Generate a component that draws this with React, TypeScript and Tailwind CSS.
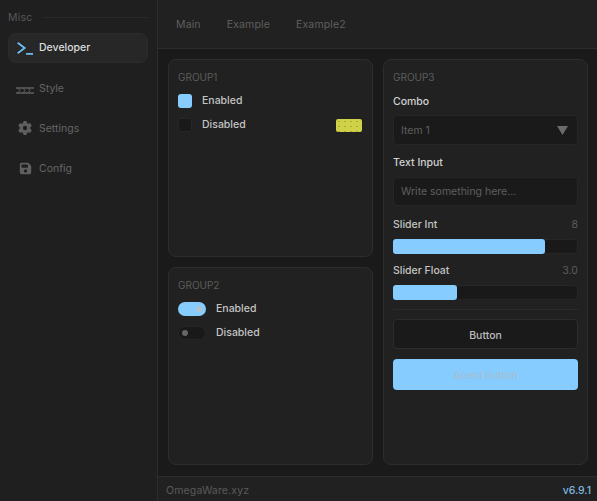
import React from "react"
import { FaGear, FaFloppyDisk } from "react-icons/fa6"

function StyleIcon() {
  return (
    <svg width="18" height="7" viewBox="0 0 18 7" fill="none" stroke="#5f5f5f" strokeWidth="1.300" className="mt-[5px]">
      <path d="M0 1h18M0 6h18" />
      <path d="M2 1l2 2.500L2 6M7 1l2 2.500L7 6M12 1l2 2.500L12 6" strokeWidth="1" />
    </svg>
  )
}

function TerminalIcon() {
  return (
    <svg width="16" height="13" viewBox="0 0 16 13" fill="none" stroke="#6fc3fb" strokeWidth="1.700">
      <path d="M0.700 0.700l7 5.300-7 5.300" />
      <path d="M9 11.900h7" />
    </svg>
  )
}

function NavItem({ icon, label, active }: { icon: React.ReactNode; label: string; active?: boolean }) {
  return (
    <div className={`flex h-[30px] items-center rounded-lg border ${active ? "border-[#2c2c2c] bg-[#272727]" : "border-transparent"}`}>
      <div className="flex w-[30px] shrink-0 justify-center pl-[2px]">{icon}</div>
      <span className={`text-[10.500px] ${active ? "font-medium text-[#dcdcdc]" : "mt-[1px] text-[#666666]"}`}>{label}</span>
    </div>
  )
}

function Group({ title, className = "", children }: { title: string; className?: string; children: React.ReactNode }) {
  return (
    <div className={`rounded-lg border border-[#2d2d2d] bg-[#212121] px-[9px] pt-[10px] ${className}`}>
      <p className="text-[10px] leading-[14px] text-[#5c5c5c]">{title}</p>
      {children}
    </div>
  )
}

function Slider({ label, value, pct }: { label: string; value: string; pct: string }) {
  return (
    <div>
      <div className="flex items-center justify-between text-[10.500px] leading-[14px]">
        <span className="font-medium text-[#c4c4c4]">{label}</span>
        <span className="text-[#5c5c5c]">{value}</span>
      </div>
      <div className="mt-[7px] h-[15px] rounded-[4px] border border-[#262626] bg-[#191919]">
        <div className={`-m-[1px] h-[15px] rounded-[3px] bg-[#86ccff] ${pct}`} />
      </div>
    </div>
  )
}

export default function App() {
  return (
    <div className="flex h-[501px] w-[597px] overflow-hidden bg-[#1f1f1f] font-['Inter','Liberation_Sans',sans-serif]">
      {/* sidebar */}
      <aside className="flex w-[158px] shrink-0 flex-col border-r border-[#2d2d2d] pl-[8px] pr-[9px]">
        <div className="flex h-[33px] items-center gap-[10px] pt-[2px]">
          <span className="text-[10.500px] tracking-[0.2px] text-[#585858]">Misc</span>
          <div className="h-px flex-1 bg-[#292929]" />
        </div>
        <div className="flex flex-col gap-[10px]">
          <NavItem active icon={<TerminalIcon />} label="Developer" />
          <NavItem icon={<StyleIcon />} label="Style" />
          <NavItem icon={<FaGear size={14} color="#5f5f5f" />} label="Settings" />
          <NavItem icon={<FaFloppyDisk size={13} color="#5f5f5f" />} label="Config" />
        </div>
      </aside>

      <div className="flex min-w-0 flex-1 flex-col">
        {/* tabs */}
        <header className="flex h-[49px] shrink-0 items-center gap-[26px] border-b border-[#2d2d2d] bg-[#212121] pl-[18px] pt-[2px] text-[10.500px] tracking-[0.15px] text-[#5f5f5f]">
          <span>Main</span>
          <span>Example</span>
          <span>Example2</span>
        </header>

        <main className="grid flex-1 grid-cols-[205px_205px] gap-[10px] bg-[#1a1a1a] px-[10px] pt-[10px] pb-[11px]">
          <div className="flex flex-col gap-[10px]">
            <Group title="GROUP1" className="flex-1">
              <div className="mt-[9px] flex h-[16px] items-center gap-[10px] text-[10.500px] font-medium text-[#c4c4c4]">
                <div className="flex h-[14px] w-[14px] items-center justify-center rounded-[3px] bg-[#86ccff]">
                  <svg width="8" height="8" viewBox="0 0 8 8" fill="none" stroke="#a3c6de" strokeWidth="1">
                    <path d="M1.500 4.500l1.500 1.500 3.500-4" />
                  </svg>
                </div>
                <span>Enabled</span>
              </div>
              <div className="mt-[8px] flex h-[16px] items-center text-[10.500px] font-medium text-[#c4c4c4]">
                <div className="mr-[10px] h-[14px] w-[14px] rounded-[3px] border border-[#262626] bg-[#191919]" />
                <span>Disabled</span>
                <div className="ml-auto mr-[1px] h-[13px] w-[26px] rounded-[2px] bg-[#cfd146] bg-[radial-gradient(#a9ab38_0.5px,transparent_0.6px)] bg-[size:6px_5px]" />
              </div>
            </Group>
            <Group title="GROUP2" className="flex-1">
              <div className="mt-[9px] flex h-[16px] items-center gap-[10px] text-[10.500px] font-medium text-[#c4c4c4]">
                <div className="flex h-[14px] w-[28px] items-center justify-end rounded-full bg-[#86ccff] pr-[4px]">
                  <div className="h-[6px] w-[6px] rounded-full bg-[#b5c3cc]" />
                </div>
                <span>Enabled</span>
              </div>
              <div className="mt-[8px] flex h-[16px] items-center gap-[10px] text-[10.500px] font-medium text-[#c4c4c4]">
                <div className="flex h-[14px] w-[28px] items-center rounded-full border border-[#262626] bg-[#191919] pl-[3px]">
                  <div className="h-[6px] w-[6px] rounded-full bg-[#666666]" />
                </div>
                <span>Disabled</span>
              </div>
            </Group>
          </div>

          <Group title="GROUP3">
            <p className="mt-[10px] pt-[1px] text-[10.500px] font-medium leading-[13px] text-[#d0d0d0]">Combo</p>
            <div className="mt-[7px] flex h-[30px] items-center justify-between rounded-[4px] border border-[#262626] bg-[#1a1a1a] pl-[7px] pr-[9px]">
              <span className="mt-[2px] text-[10.500px] text-[#5f5f5f]">Item 1</span>
              <svg width="11" height="9" viewBox="0 0 11 9"><path d="M0 0h11L5.500 9z" fill="#6b6b6b" /></svg>
            </div>
            <p className="mt-[11px] text-[10.500px] font-medium leading-[14px] text-[#d0d0d0]">Text Input</p>
            <div className="mt-[7px] flex h-[29px] items-center rounded-[4px] border border-[#262626] bg-[#1a1a1a] pl-[7px]">
              <span className="text-[10.500px] text-[#5f5f5f]">Write something here...</span>
            </div>
            <div className="mt-[12px]">
              <Slider label="Slider Int" value="8" pct="w-[152px]" />
            </div>
            <div className="mt-[10px]">
              <Slider label="Slider Float" value="3.0" pct="w-[64px]" />
            </div>
            <div className="mt-[9px] h-px bg-[#2b2b2b]" />
            <button className="mt-[9px] h-[30px] w-full rounded-[4px] border border-[#2d2d2d] bg-[#1a1a1a] pt-[3px] text-[10.500px] font-medium text-[#bcbcbc]">
              Button
            </button>
            <button className="mt-[10px] h-[31px] w-full rounded-[4px] bg-[#86ccff] pt-[3px] text-[10.500px] font-medium text-[#a3bfd3]">
              Acent button
            </button>
          </Group>
        </main>

        <footer className="flex h-[25px] shrink-0 items-center justify-between border-t border-[#2d2d2d] bg-[#212121] pl-[8px] pr-[6px] pt-[3px] text-[10.500px]">
          <span className="tracking-[0.15px] text-[#5a5a5a]">OmegaWare.xyz</span>
          <span className="font-medium text-[#7db8e0]">v6.9.1</span>
        </footer>
      </div>
    </div>
  )
}
